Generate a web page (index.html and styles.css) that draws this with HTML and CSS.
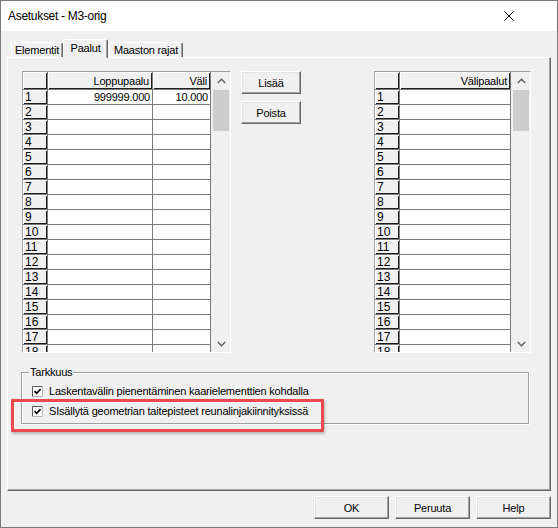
FILE: index.html
```html
<!DOCTYPE html>
<html lang="fi">
<head>
<meta charset="utf-8">
<title>Asetukset - M3-orig</title>
<link rel="stylesheet" href="styles.css">
</head>
<body>
<div class="window">
  <div class="titlebar">
    <span class="title">Asetukset - M3-orig</span>
    <svg class="close" width="10" height="10" viewBox="0 0 10 10"><path d="M0.5 0.5 L9.5 9.5 M9.5 0.5 L0.5 9.5" stroke="#000" stroke-width="1" fill="none"/></svg>
  </div>
  <div class="content">
    <div class="tabs">
      <div class="tab tab-elem">Elementit</div>
      <div class="tab tab-active">Paalut</div>
      <div class="tab tab-maasto">Maaston rajat</div>
    </div>
    <div class="panel">
      <div class="top-row">
        <div class="grid">
          <div class="cells cells-left">
            <div class="fx corner"></div><div class="fx hd">Loppupaalu</div><div class="fx hd">Väli</div>
            <div class="fx rh">1</div><div class="c">999999.000</div><div class="c">10.000</div>
            <div class="fx rh">2</div><div class="c"></div><div class="c"></div>
            <div class="fx rh">3</div><div class="c"></div><div class="c"></div>
            <div class="fx rh">4</div><div class="c"></div><div class="c"></div>
            <div class="fx rh">5</div><div class="c"></div><div class="c"></div>
            <div class="fx rh">6</div><div class="c"></div><div class="c"></div>
            <div class="fx rh">7</div><div class="c"></div><div class="c"></div>
            <div class="fx rh">8</div><div class="c"></div><div class="c"></div>
            <div class="fx rh">9</div><div class="c"></div><div class="c"></div>
            <div class="fx rh">10</div><div class="c"></div><div class="c"></div>
            <div class="fx rh">11</div><div class="c"></div><div class="c"></div>
            <div class="fx rh">12</div><div class="c"></div><div class="c"></div>
            <div class="fx rh">13</div><div class="c"></div><div class="c"></div>
            <div class="fx rh">14</div><div class="c"></div><div class="c"></div>
            <div class="fx rh">15</div><div class="c"></div><div class="c"></div>
            <div class="fx rh">16</div><div class="c"></div><div class="c"></div>
            <div class="fx rh">17</div><div class="c"></div><div class="c"></div>
            <div class="fx rh">18</div><div class="c"></div><div class="c"></div>
          </div>
          <div class="scroll">
            <div class="arrow"><svg width="9" height="6" viewBox="0 0 9 6"><path d="M0.8 5 L4.5 1.3 L8.2 5" stroke="#606060" stroke-width="1.5" fill="none"/></svg></div>
            <div class="thumb"></div>
            <div class="track"></div>
            <div class="arrow"><svg width="9" height="6" viewBox="0 0 9 6"><path d="M0.8 1 L4.5 4.7 L8.2 1" stroke="#606060" stroke-width="1.5" fill="none"/></svg></div>
          </div>
        </div>
        <div class="side">
          <div class="btn btn-side">Lisää</div>
          <div class="btn btn-side">Poista</div>
        </div>
        <div class="grid grid-right">
          <div class="cells cells-right">
            <div class="fx corner"></div><div class="fx hd">Välipaalut</div>
            <div class="fx rh">1</div><div class="c"></div>
            <div class="fx rh">2</div><div class="c"></div>
            <div class="fx rh">3</div><div class="c"></div>
            <div class="fx rh">4</div><div class="c"></div>
            <div class="fx rh">5</div><div class="c"></div>
            <div class="fx rh">6</div><div class="c"></div>
            <div class="fx rh">7</div><div class="c"></div>
            <div class="fx rh">8</div><div class="c"></div>
            <div class="fx rh">9</div><div class="c"></div>
            <div class="fx rh">10</div><div class="c"></div>
            <div class="fx rh">11</div><div class="c"></div>
            <div class="fx rh">12</div><div class="c"></div>
            <div class="fx rh">13</div><div class="c"></div>
            <div class="fx rh">14</div><div class="c"></div>
            <div class="fx rh">15</div><div class="c"></div>
            <div class="fx rh">16</div><div class="c"></div>
            <div class="fx rh">17</div><div class="c"></div>
            <div class="fx rh">18</div><div class="c"></div>
          </div>
          <div class="scroll">
            <div class="arrow"><svg width="9" height="6" viewBox="0 0 9 6"><path d="M0.8 5 L4.5 1.3 L8.2 5" stroke="#606060" stroke-width="1.5" fill="none"/></svg></div>
            <div class="thumb"></div>
            <div class="track"></div>
            <div class="arrow"><svg width="9" height="6" viewBox="0 0 9 6"><path d="M0.8 1 L4.5 4.7 L8.2 1" stroke="#606060" stroke-width="1.5" fill="none"/></svg></div>
          </div>
        </div>
      </div>
      <fieldset class="group">
        <legend class="group-title">Tarkkuus</legend>
        <div class="check-row">
          <svg class="check" width="11" height="11" viewBox="0 0 11 11"><rect x="0" y="0" width="11" height="11" fill="#fff"/><path d="M0.5 10.5 V0.5 H10.5" stroke="#5a5a5a" fill="none"/><path d="M10.5 0.5 V10.5 H0.5" stroke="#b4b4b4" fill="none"/><path d="M2.6 5.2 L4.6 7.3 L8.6 3.1" stroke="#000" stroke-width="1.7" fill="none"/></svg>
          <span>Laskentavälin pienentäminen kaarielementtien kohdalla</span>
        </div>
        <div class="check-row">
          <svg class="check" width="11" height="11" viewBox="0 0 11 11"><rect x="0" y="0" width="11" height="11" fill="#fff"/><path d="M0.5 10.5 V0.5 H10.5" stroke="#5a5a5a" fill="none"/><path d="M10.5 0.5 V10.5 H0.5" stroke="#b4b4b4" fill="none"/><path d="M2.6 5.2 L4.6 7.3 L8.6 3.1" stroke="#000" stroke-width="1.7" fill="none"/></svg>
          <span>SIsällytä geometrian taitepisteet reunalinjakiinnityksissä</span>
        </div>
      </fieldset>
    </div>
    <div class="footer">
      <div class="btn btn-foot">OK</div>
      <div class="btn btn-foot">Peruuta</div>
      <div class="btn btn-foot">Help</div>
    </div>
  </div>
  <div class="highlight"></div>
</div>
</body>
</html>
```
FILE: styles.css
```css
* { box-sizing: border-box; }

body {
  margin: 0;
  font-family: "Liberation Sans", Arial, sans-serif;
  font-size: 11px;
  letter-spacing: -0.2px;
  color: #000;
  background: #fff;
}

.window {
  position: relative;
  width: 558px;
  height: 528px;
  border: 1px solid #7a7a7a;
  background: #f0f0f0;
  display: flex;
  flex-direction: column;
}

.titlebar {
  height: 30px;
  flex: none;
  background: #fff;
  display: flex;
  align-items: center;
  justify-content: space-between;
  padding-left: 7px;
}

.title {
  font-size: 12px;
  letter-spacing: -0.3px;
}

.close {
  margin-right: 43px;
  display: block;
}

.content {
  flex: 1;
  display: flex;
  flex-direction: column;
  padding: 8px 6px 0 6px;
}

.tabs {
  display: flex;
  align-items: flex-end;
  height: 18px;
  padding-left: 4px;
  position: relative;
  z-index: 1;
}

.tab {
  height: 15px;
  border-top: 1px solid #fff;
  border-left: 1px solid #fff;
  border-right: 1px solid #696969;
  box-shadow: inset -1px 0 0 #a0a0a0;
  border-radius: 2px 2px 0 0;
  display: flex;
  align-items: center;
  justify-content: center;
  background: #f0f0f0;
  padding-bottom: 1px;
}

.tab-elem { width: 52px; }
.tab-maasto { width: 74px; margin-left: 1px; }

.tab-active {
  width: 45px;
  height: 19px;
  margin-bottom: -1px;
  padding-bottom: 3px;
  position: relative;
  z-index: 2;
}

.panel {
  height: 434px;
  flex: none;
  border: 1px solid;
  border-color: #fff #696969 #696969 #fff;
  box-shadow: inset -1px -1px 0 #a0a0a0;
  padding: 13px 0 0 14px;
}

.top-row {
  display: flex;
  align-items: flex-start;
}

.grid {
  display: flex;
  height: 282px;
  border: 1px solid;
  border-color: #a0a0a0 #fff #fff #a0a0a0;
}

.grid-right { margin-left: 73px; }

.cells {
  display: grid;
  grid-template-rows: 18px;
  grid-auto-rows: 15px;
  align-content: start;
  height: 280px;
  overflow: hidden;
  background: #fff;
}

.cells-left { grid-template-columns: 25px 105px 58px; }
.cells-right { grid-template-columns: 25px 111px; }

.c {
  background: #fff;
  border-right: 1px solid #7a7a7a;
  border-bottom: 1px solid #7a7a7a;
  display: flex;
  align-items: center;
  justify-content: flex-end;
  padding-right: 2px;
  white-space: nowrap;
}

.fx {
  background: #f0f0f0;
  border-right: 1px solid #7a7a7a;
  border-bottom: 1px solid #7a7a7a;
  box-shadow: inset 1px 1px 0 #fff, inset -1px -1px 0 #1e1e1e;
  display: flex;
  align-items: center;
  white-space: nowrap;
}

.hd {
  justify-content: flex-end;
  padding-right: 3px;
}

.rh {
  padding-left: 2px;
  font-size: 12px;
  letter-spacing: 0;
}

.scroll {
  width: 19px;
  display: flex;
  flex-direction: column;
  background: #f0f0f0;
}

.arrow {
  height: 17px;
  display: flex;
  align-items: center;
  justify-content: center;
  padding-left: 1px;
}

.arrow svg { display: block; }

.thumb {
  height: 41px;
  margin: 1px 1px 0 2px;
  background: #cdcdcd;
}

.track { flex: 1; }

.side {
  margin-left: 10px;
  display: flex;
  flex-direction: column;
  gap: 7px;
}

.btn {
  height: 23px;
  background: #f0f0f0;
  border: 1px solid;
  border-color: #fff #696969 #696969 #fff;
  box-shadow: inset -1px -1px 0 #a0a0a0, inset 1px 1px 0 #e3e3e3;
  display: flex;
  align-items: center;
  justify-content: center;
}

.btn-side { width: 60px; }
.btn-foot { width: 75px; }

.group {
  margin: 13px 0 0 -1px;
  width: 508px;
  min-width: 0;
  border: 1px solid #a0a0a0;
  box-shadow: 1px 1px 0 #fff, inset 1px 1px 0 #fff;
  padding: 2px 10px 2px 10px;
}

.group-title {
  padding: 0 1px;
  margin-left: -3px;
  line-height: 13px;
  background: #f0f0f0;
}

.check-row {
  height: 20px;
  display: flex;
  align-items: center;
  gap: 6px;
  white-space: nowrap;
}

.check { display: block; flex: none; }

.footer {
  display: flex;
  justify-content: flex-end;
  gap: 6px;
  padding-top: 5px;
}

.highlight {
  position: absolute;
  left: 10px;
  top: 398px;
  width: 313px;
  height: 33px;
  border: 3px solid #eb4850;
  border-radius: 1px;
  box-shadow: 1px 2px 3px rgba(0, 0, 0, 0.25);
}
```
